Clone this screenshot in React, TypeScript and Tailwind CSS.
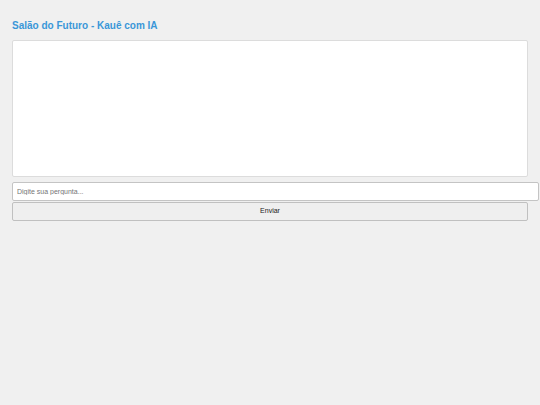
import React, { useState } from 'react';

const App: React.FC = () => {
  const [pergunta, setPergunta] = useState('');

  return (
    <div className="min-h-[405px] bg-[#f0f0f0] px-3 pt-[19px] font-['Liberation_Sans',Arial,sans-serif]">
      <h1 className="text-[10px] font-bold leading-[13px] text-[#3a97d8] mb-[8px]">
        Salão do Futuro - Kauê com IA
      </h1>
      <div className="w-[516px] h-[137px] bg-white border border-[#dcdcdc] rounded-[2px]" />
      <input
        value={pergunta}
        onChange={e => setPergunta(e.target.value)}
        placeholder="Digite sua pergunta..."
        className="block mt-[5px] w-[527px] h-[19px] px-[4px] bg-white border border-[#c4c4c4] rounded-[2px] text-[7px] text-[#333] placeholder:text-[#757575] outline-none"
      />
      <button className="block mt-[1px] w-[516px] h-[19px] bg-[#efefef] border border-[#c0c0c0] rounded-[2px] text-[7px] font-normal text-[#222]">
        Enviar
      </button>
    </div>
  );
};

export default App;
